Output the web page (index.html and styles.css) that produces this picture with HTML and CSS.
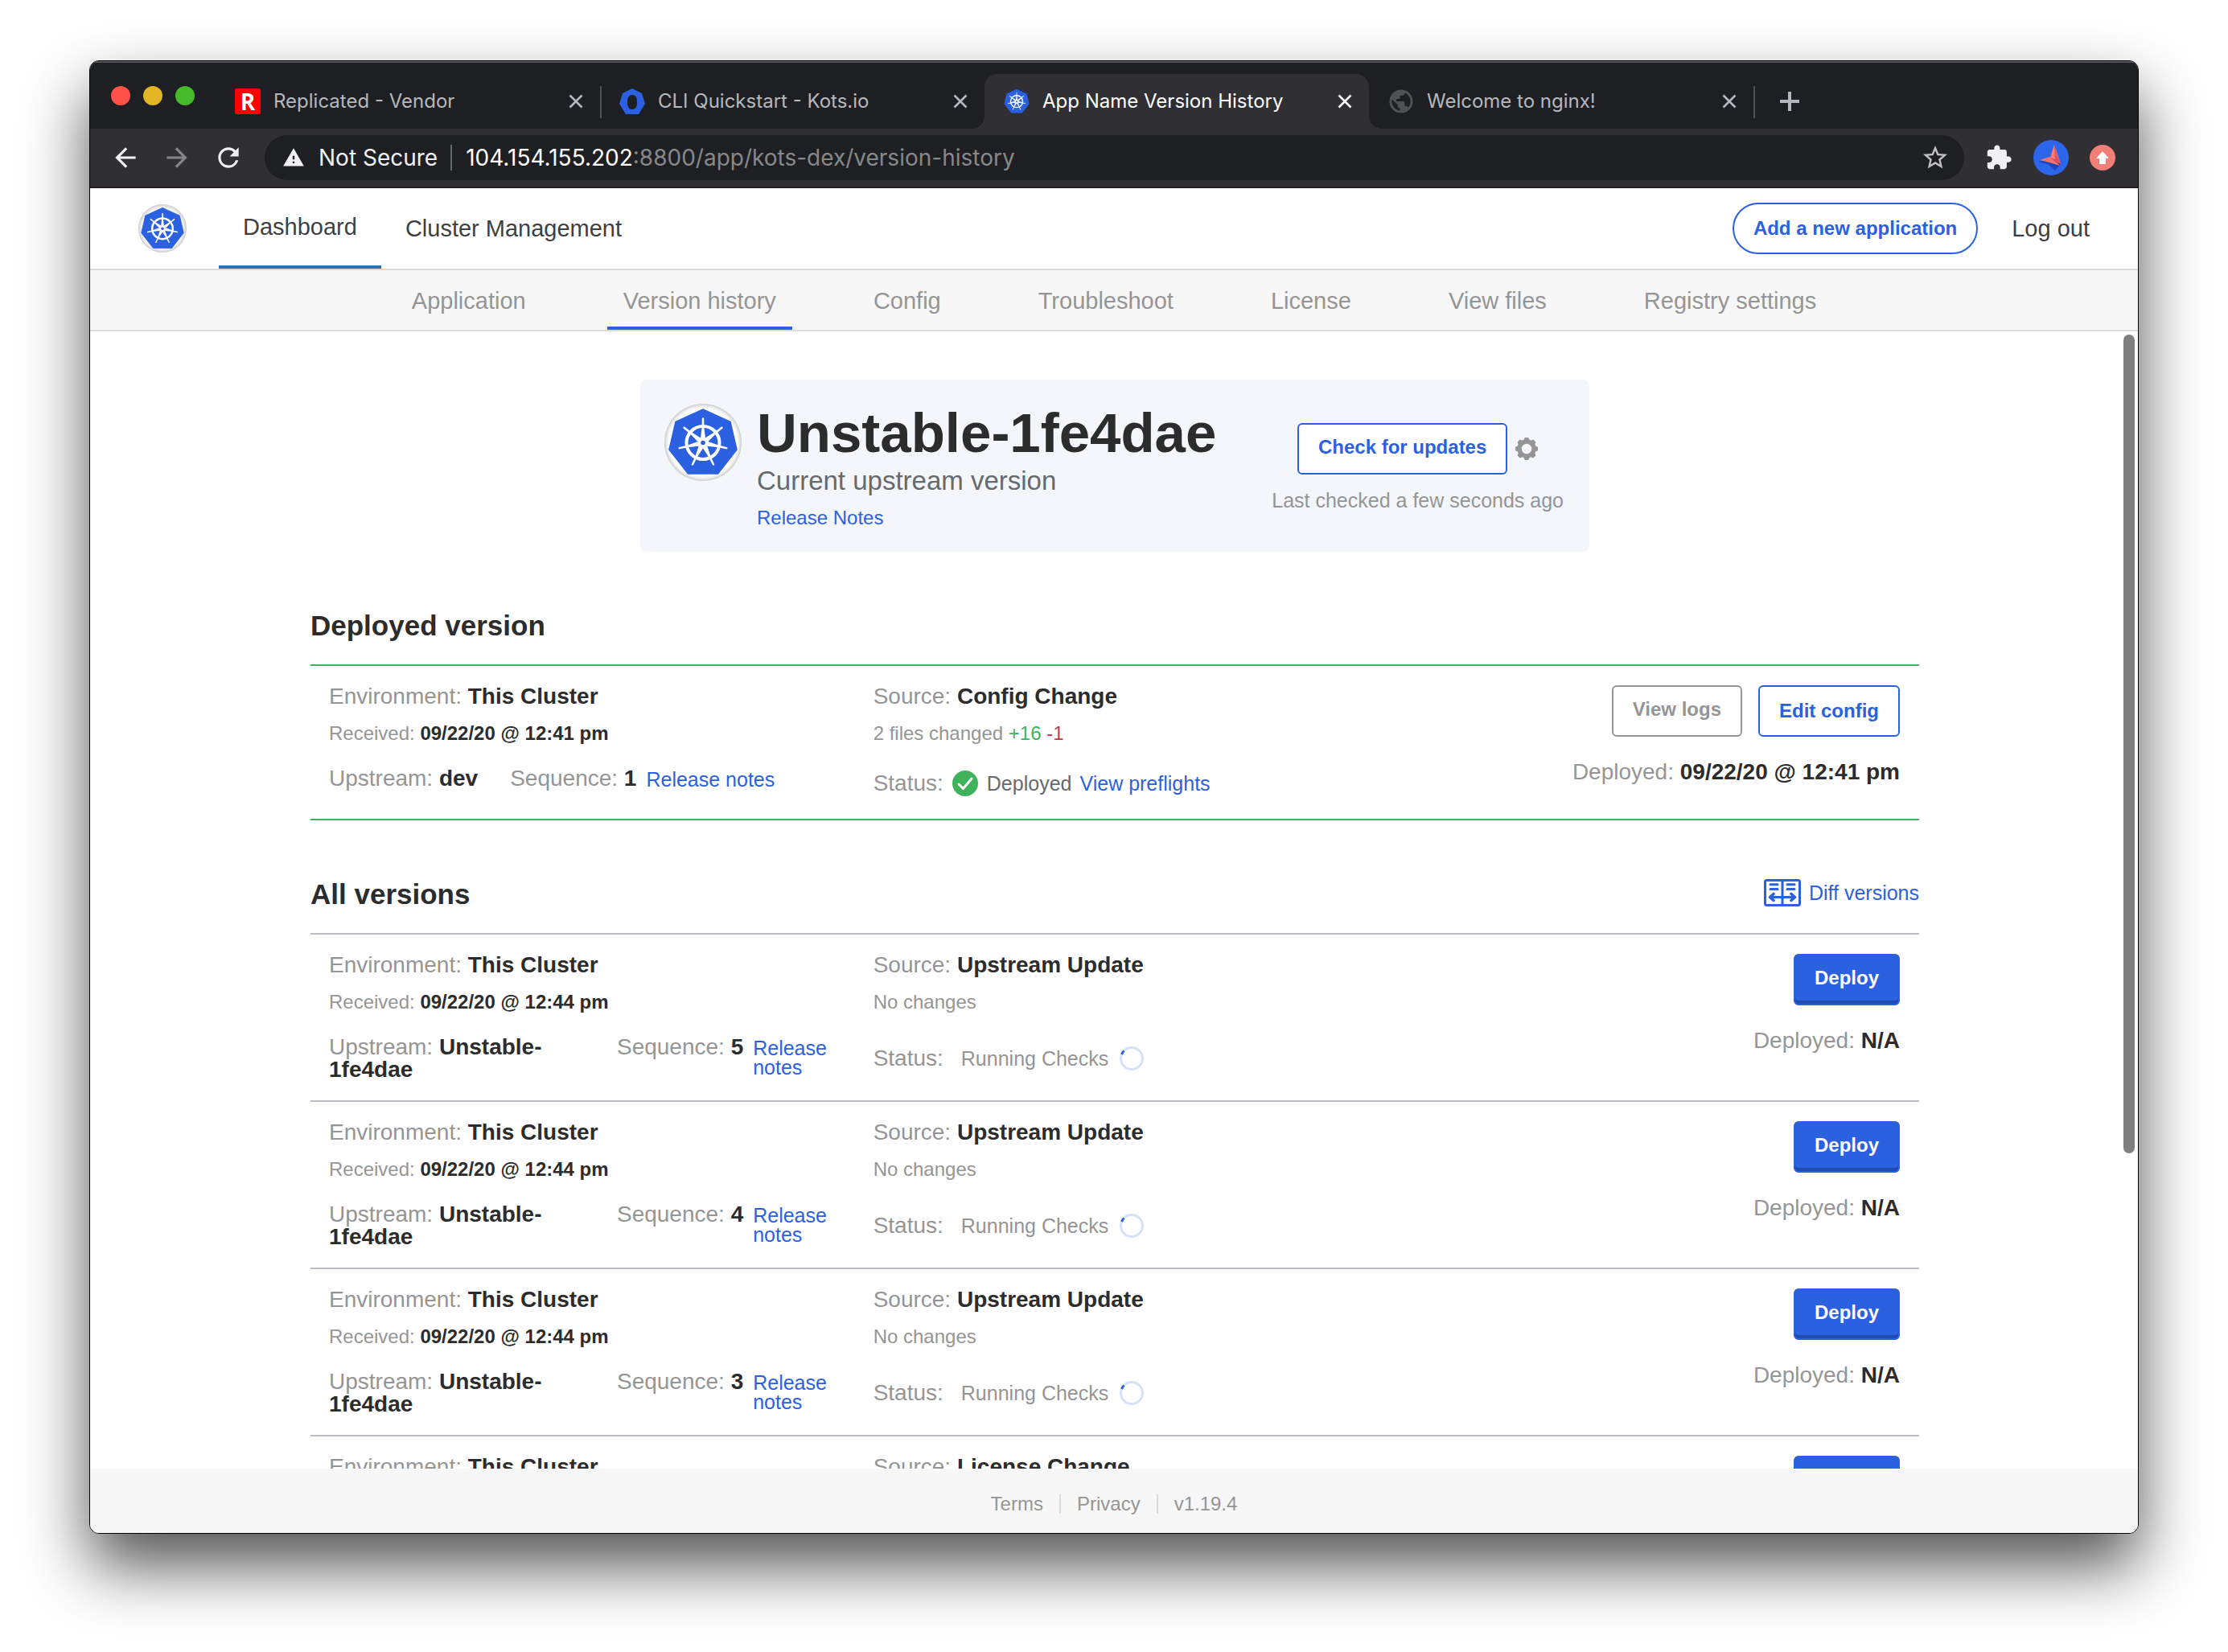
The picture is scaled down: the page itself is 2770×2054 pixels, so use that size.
FILE: index.html
```html
<!DOCTYPE html>
<html lang="en">
<head>
<meta charset="utf-8">
<title>App Name Version History</title>
<link rel="stylesheet" href="styles.css">
</head>
<body>
<svg class="sprite" aria-hidden="true">
  <symbol id="wheel" viewBox="0 0 96 96">
    <path d="M48 7 82 22.500 90 57 66.500 87H29.500L6 57 14 22.500z" fill="#2b61e0" stroke="#2b61e0" stroke-width="1.500" stroke-linejoin="round"/>
    <g fill="#fff">
      <path id="spoke" d="M46.800 18.500a1.200 1.200 0 0 1 2.400 0L49.400 30 51 42.500 48 45 45 42.500 46.600 30z"/>
      <use href="#spoke" transform="rotate(51.430 48 48.500)"/>
      <use href="#spoke" transform="rotate(102.860 48 48.500)"/>
      <use href="#spoke" transform="rotate(154.290 48 48.500)"/>
      <use href="#spoke" transform="rotate(205.710 48 48.500)"/>
      <use href="#spoke" transform="rotate(257.140 48 48.500)"/>
      <use href="#spoke" transform="rotate(308.570 48 48.500)"/>
      <circle cx="48" cy="48.500" r="6"/>
    </g>
    <circle cx="48" cy="48.500" r="20.500" fill="none" stroke="#fff" stroke-width="4"/>
    <circle cx="48" cy="48.500" r="2.800" fill="#2b61e0"/>
  </symbol>
  <symbol id="close" viewBox="0 0 20 20">
    <path d="M2.500 2.500l15 15M17.500 2.500l-15 15" fill="none" stroke="currentColor" stroke-width="2.600"/>
  </symbol>
</svg>

<div class="window">
  <div class="tabstrip">
    <div class="lights"><span class="light light-red"></span><span class="light light-yellow"></span><span class="light light-green"></span></div>
    <div class="tab tab-divided">
      <span class="favicon favicon-r">R</span>
      <span class="tab-title">Replicated - Vendor</span>
      <button class="tab-close" aria-label="Close tab"><svg><use href="#close"/></svg></button>
    </div>
    <div class="tab">
      <svg class="favicon" viewBox="0 0 32 32"><path fill-rule="evenodd" d="M16 0 28 6 32 19 24 32H8L0 19 4 6zM16 8C12 8 10 11 10 17s2 9 6 9 6-3 6-9-2-9-6-9z" fill="#2b61e0"/></svg>
      <span class="tab-title">CLI Quickstart - Kots.io</span>
      <button class="tab-close" aria-label="Close tab"><svg><use href="#close"/></svg></button>
    </div>
    <div class="tab tab-active">
      <svg class="favicon" viewBox="4 4 88 88"><use href="#wheel" width="96" height="96"/></svg>
      <span class="tab-title">App Name Version History</span>
      <button class="tab-close" aria-label="Close tab"><svg><use href="#close"/></svg></button>
    </div>
    <div class="tab tab-divided">
      <svg class="favicon favicon-globe" viewBox="1 1 22 22"><path fill="currentColor" d="M12 2C6.480 2 2 6.480 2 12s4.480 10 10 10 10-4.480 10-10S17.520 2 12 2zm-1 17.930c-3.950-.490-7-3.850-7-7.930 0-.620.080-1.210.210-1.790L9 15v1c0 1.100.900 2 2 2v1.930zm6.900-2.540c-.260-.810-1-1.390-1.900-1.390h-1v-3c0-.550-.450-1-1-1H8v-2h2c.550 0 1-.450 1-1V7h2c1.100 0 2-.900 2-2v-.410c2.930 1.190 5 4.060 5 7.410 0 2.080-.800 3.970-2.100 5.390z"/></svg>
      <span class="tab-title">Welcome to nginx!</span>
      <button class="tab-close" aria-label="Close tab"><svg><use href="#close"/></svg></button>
    </div>
    <button class="new-tab" aria-label="New tab"><svg viewBox="0 0 26 26"><path d="M13 1v24M1 13h24" stroke="currentColor" stroke-width="4"/></svg></button>
  </div>

  <div class="toolbar">
    <button class="tool" aria-label="Back"><svg viewBox="0 0 24 24"><path d="M20 11H7.830l5.590-5.590L12 4l-8 8 8 8 1.410-1.410L7.830 13H20v-2z"/></svg></button>
    <button class="tool tool-dim" aria-label="Forward"><svg viewBox="0 0 24 24"><path d="M4 11h12.170l-5.590-5.590L12 4l8 8-8 8-1.410-1.410L16.170 13H4v-2z"/></svg></button>
    <button class="tool" aria-label="Reload"><svg viewBox="0 0 24 24"><path d="M17.650 6.350A7.960 7.960 0 0 0 12 4c-4.420 0-7.990 3.580-7.990 8s3.570 8 7.990 8c3.730 0 6.840-2.550 7.730-6h-2.080A5.990 5.990 0 0 1 12 18c-3.310 0-6-2.690-6-6s2.690-6 6-6c1.660 0 3.140.690 4.220 1.780L13 11h7V4l-2.350 2.350z"/></svg></button>
    <div class="omnibox">
      <svg class="warn" viewBox="0 0 24 24"><path d="M1 21h22L12 2 1 21zm12-3h-2v-2h2v2zm0-4h-2v-4h2v4z"/></svg>
      <span class="insecure">Not Secure</span>
      <div class="url" role="textbox" aria-label="Address" contenteditable="true" spellcheck="false">104.154.155.202<span class="url-path">:8800/app/kots-dex/version-history</span></div>
      <button class="star" aria-label="Bookmark"><svg viewBox="0 0 24 24"><path d="M22 9.240l-7.190-.620L12 2 9.190 8.630 2 9.240l5.460 4.730L5.820 21 12 17.270 18.180 21l-1.630-7.030L22 9.240zM12 15.400l-3.760 2.270 1-4.280-3.320-2.880 4.380-.380L12 6.100l1.710 4.040 4.380.380-3.320 2.880 1 4.280L12 15.400z"/></svg></button>
    </div>
    <button class="tool tool-ext" aria-label="Extensions"><svg viewBox="0 0 24 24"><path d="M20.500 11H19V7c0-1.100-.900-2-2-2h-4V3.500C13 2.120 11.880 1 10.500 1S8 2.120 8 3.500V5H4c-1.100 0-1.990.900-1.990 2v3.800H3.500c1.490 0 2.700 1.210 2.700 2.700s-1.210 2.700-2.700 2.700H2V20c0 1.100.900 2 2 2h3.800v-1.500c0-1.490 1.210-2.700 2.700-2.700s2.700 1.210 2.700 2.700V22H17c1.100 0 2-.900 2-2v-4h1.500c1.380 0 2.500-1.120 2.500-2.500S21.880 11 20.500 11z"/></svg></button>
    <button class="tool tool-avatar" aria-label="Profile"><svg viewBox="0 0 44 44"><circle cx="22" cy="22" r="22" fill="#2b66ea"/><path d="M6 27 22 22 34 30 27 38 18 30z" fill="#1d45b8"/><path d="M26 6 33 27 21 22z" fill="#ff7d74"/><path d="M26 6 29 18 33 27 35 30 27 27z" fill="#e0525c"/><path d="M8 25 20 21 27 25 33 32 20 28z" fill="#f8706c"/><path d="M20 21 27 25 33 32 24 24z" fill="#c93f55"/></svg></button>
    <button class="tool tool-update" aria-label="Update"><svg viewBox="0 0 32 32"><circle cx="16" cy="16" r="16" fill="#f07f78"/><path d="M16 8 24 17H20V24H12V17H8z" fill="#fff"/></svg></button>
  </div>

  <header class="header">
    <a class="logo" href="#"><svg><use href="#wheel"/></svg></a>
    <nav class="primary">
      <a class="primary-link is-active" href="#">Dashboard</a>
      <a class="primary-link" href="#">Cluster Management</a>
    </nav>
    <button class="btn btn-pill">Add a new application</button>
    <a class="logout" href="#">Log out</a>
  </header>

  <nav class="subnav">
    <a href="#">Application</a>
    <a class="is-active" href="#">Version history</a>
    <a href="#">Config</a>
    <a href="#">Troubleshoot</a>
    <a href="#">License</a>
    <a href="#">View files</a>
    <a href="#">Registry settings</a>
  </nav>

  <main class="main">
    <section class="hero">
      <div class="hero-icon"><svg><use href="#wheel"/></svg></div>
      <div class="hero-text">
        <h1>Unstable-1fe4dae</h1>
        <p>Current upstream version</p>
        <a href="#">Release Notes</a>
      </div>
      <div class="hero-actions">
        <div class="hero-check">
          <button class="btn btn-raised">Check for updates</button>
          <button class="gear" aria-label="Update settings"><svg viewBox="0 0 28 28"><circle cx="14" cy="14" r="9" fill="none" stroke="currentColor" stroke-width="5.400"/><g fill="currentColor"><path id="tooth" d="M10.800 2.500 11.800 0h4.400l1 2.500V5h-6.400z"/><use href="#tooth" transform="rotate(45 14 14)"/><use href="#tooth" transform="rotate(90 14 14)"/><use href="#tooth" transform="rotate(135 14 14)"/><use href="#tooth" transform="rotate(180 14 14)"/><use href="#tooth" transform="rotate(225 14 14)"/><use href="#tooth" transform="rotate(270 14 14)"/><use href="#tooth" transform="rotate(315 14 14)"/></g></svg></button>
        </div>
        <p>Last checked a few seconds ago</p>
      </div>
    </section>

    <div class="versions">
      <div class="section-head"><h2>Deployed version</h2></div>
      <article class="row row-deployed">
        <div class="col">
          <p class="line">Environment: <strong>This Cluster</strong></p>
          <p class="meta">Received: <strong>09/22/20 @ 12:41 pm</strong></p>
          <div class="source">
            <p class="line">Upstream: <strong>dev</strong></p>
            <div class="sequence"><p class="line">Sequence: <strong>1</strong></p><a href="#">Release notes</a></div>
          </div>
        </div>
        <div class="col">
          <p class="line">Source: <strong>Config Change</strong></p>
          <p class="meta">2 files changed <span class="added">+16</span> <span class="removed">-1</span></p>
          <div class="status">
            <span class="line">Status:</span>
            <svg class="check" viewBox="0 0 32 32"><circle cx="16" cy="16" r="16" fill="#3fb35b"/><path d="M8 17l5.500 5.500L24 10" fill="none" stroke="#fff" stroke-width="3" stroke-linecap="round" stroke-linejoin="round"/></svg>
            <span class="status-done">Deployed</span>
            <a href="#">View preflights</a>
          </div>
        </div>
        <div class="col col-end">
          <div class="buttons"><button class="btn btn-grey btn-raised">View logs</button><button class="btn">Edit config</button></div>
          <p class="line">Deployed: <strong>09/22/20 @ 12:41 pm</strong></p>
        </div>
      </article>

      <div class="section-head">
        <h2>All versions</h2>
        <a class="diff" href="#"><svg viewBox="0 0 46 34"><g fill="none" stroke="currentColor" stroke-width="3" stroke-linecap="round" stroke-linejoin="round"><rect x="1.500" y="1.500" width="43" height="31" rx="2"/><path d="M23 2v30M8 6.800h9M8 12.500h9M29 6.800h9M29 12.500h9M8 22.500h30"/><path d="M12 18.500 7.500 22.500 12 26.500M34 18.500 38.500 22.500 34 26.500" stroke-width="3.600"/></g></svg>Diff versions</a>
      </div>
      <article class="row">
        <div class="col">
          <p class="line">Environment: <strong>This Cluster</strong></p>
          <p class="meta">Received: <strong>09/22/20 @ 12:44 pm</strong></p>
          <div class="source">
            <p class="line">Upstream: <strong>Unstable-1fe4dae</strong></p>
            <div class="sequence"><p class="line">Sequence: <strong>5</strong></p><a href="#">Release notes</a></div>
          </div>
        </div>
        <div class="col">
          <p class="line">Source: <strong>Upstream Update</strong></p>
          <p class="meta">No changes</p>
          <div class="status"><span class="line">Status:</span><span class="status-running">Running Checks</span><svg class="spinner" viewBox="0 0 30 30"><circle cx="15" cy="15" r="13.500"/><path d="M2.500 10A13.500 13.500 0 0 1 5.500 5.500"/></svg></div>
        </div>
        <div class="col col-end">
          <div class="buttons"><button class="btn btn-primary btn-raised">Deploy</button></div>
          <p class="line">Deployed: <strong>N/A</strong></p>
        </div>
      </article>
      <article class="row">
        <div class="col">
          <p class="line">Environment: <strong>This Cluster</strong></p>
          <p class="meta">Received: <strong>09/22/20 @ 12:44 pm</strong></p>
          <div class="source">
            <p class="line">Upstream: <strong>Unstable-1fe4dae</strong></p>
            <div class="sequence"><p class="line">Sequence: <strong>4</strong></p><a href="#">Release notes</a></div>
          </div>
        </div>
        <div class="col">
          <p class="line">Source: <strong>Upstream Update</strong></p>
          <p class="meta">No changes</p>
          <div class="status"><span class="line">Status:</span><span class="status-running">Running Checks</span><svg class="spinner" viewBox="0 0 30 30"><circle cx="15" cy="15" r="13.500"/><path d="M2.500 10A13.500 13.500 0 0 1 5.500 5.500"/></svg></div>
        </div>
        <div class="col col-end">
          <div class="buttons"><button class="btn btn-primary btn-raised">Deploy</button></div>
          <p class="line">Deployed: <strong>N/A</strong></p>
        </div>
      </article>
      <article class="row">
        <div class="col">
          <p class="line">Environment: <strong>This Cluster</strong></p>
          <p class="meta">Received: <strong>09/22/20 @ 12:44 pm</strong></p>
          <div class="source">
            <p class="line">Upstream: <strong>Unstable-1fe4dae</strong></p>
            <div class="sequence"><p class="line">Sequence: <strong>3</strong></p><a href="#">Release notes</a></div>
          </div>
        </div>
        <div class="col">
          <p class="line">Source: <strong>Upstream Update</strong></p>
          <p class="meta">No changes</p>
          <div class="status"><span class="line">Status:</span><span class="status-running">Running Checks</span><svg class="spinner" viewBox="0 0 30 30"><circle cx="15" cy="15" r="13.500"/><path d="M2.500 10A13.500 13.500 0 0 1 5.500 5.500"/></svg></div>
        </div>
        <div class="col col-end">
          <div class="buttons"><button class="btn btn-primary btn-raised">Deploy</button></div>
          <p class="line">Deployed: <strong>N/A</strong></p>
        </div>
      </article>
      <article class="row">
        <div class="col">
          <p class="line">Environment: <strong>This Cluster</strong></p>
        </div>
        <div class="col">
          <p class="line">Source: <strong>License Change</strong></p>
        </div>
        <div class="col col-end">
          <div class="buttons"><button class="btn btn-primary btn-raised" aria-label="Deploy"></button></div>
        </div>
      </article>
    </div>
    <div class="scroll-thumb"></div>
  </main>

  <footer class="footer">
    <a href="#">Terms</a>
    <a href="#">Privacy</a>
    <span>v1.19.4</span>
  </footer>
</div>
</body>
</html>
```
FILE: styles.css
```css
* { box-sizing: border-box; }

:root {
  --blue: #2b61e0;
  --grey: #959595;
  --ink: #2c2c2c;
}

body {
  margin: 0;
  height: 100vh;
  padding: 75px 111px 147px;
  background: #fff;
  color: var(--ink);
  font-family: "Liberation Sans", Arial, sans-serif;
  font-size: 24px;
  line-height: 24px;
}

h1, h2, p { margin: 0; }
a { color: var(--blue); text-decoration: none; }
svg { display: block; }
button {
  padding: 0;
  border: 0;
  background: none;
  color: inherit;
  font: inherit;
  cursor: pointer;
}

.sprite { position: absolute; width: 0; height: 0; }

.window {
  display: flex;
  flex-direction: column;
  height: 100%;
  border: 1px solid #000;
  border-radius: 12px;
  overflow: hidden;
  background: #fff;
  box-shadow: 0 40px 80px rgba(0, 0, 0, 0.68);
}

/* Browser tabs */
.tabstrip {
  display: flex;
  flex: none;
  padding-top: 14px;
  border-top: 2px solid #55585a;
  background: #1e1f23;
  color: #b6b8bd;
  font-family: Inter, sans-serif;
  font-size: 24px;
}
.lights {
  display: flex;
  flex: none;
  align-items: center;
  gap: 16px;
  width: 156px;
  padding: 0 0 14px 26px;
}
.light { width: 24px; height: 24px; border-radius: 50%; }
.light-red { background: #ff5147; }
.light-yellow { background: #e2b526; }
.light-green { background: #46bb2a; }

.tab {
  position: relative;
  display: flex;
  flex: 0 1 478px;
  align-items: center;
  gap: 16px;
  height: 68px;
  padding: 0 20px 0 24px;
}
.tab-divided::after {
  content: "";
  position: absolute;
  right: -2px;
  top: 15px;
  width: 2px;
  height: 40px;
  background: #505156;
}
.tab-active {
  border-radius: 16px 16px 0 0;
  background: #302f33;
  color: #fff;
}
.tab-active::before,
.tab-active::after {
  content: "";
  position: absolute;
  bottom: 0;
  width: 16px;
  height: 16px;
}
.tab-active::before { left: -16px; background: radial-gradient(circle at 0 0, transparent 16px, #302f33 16px); }
.tab-active::after { right: -16px; background: radial-gradient(circle at 100% 0, transparent 16px, #302f33 16px); }
.tab-title { flex: 1; white-space: nowrap; overflow: hidden; line-height: 32px; }
.tab-close svg { width: 20px; height: 20px; }
.favicon { flex: none; width: 32px; height: 32px; }
.favicon-r {
  border-radius: 2px;
  background: #f00;
  color: #fff;
  font: bold 28px/32px "Open Sans", sans-serif;
  text-align: center;
}
.favicon-globe { color: #505155; }
.new-tab { display: flex; align-items: center; padding: 0 32px; }
.new-tab svg { width: 26px; height: 26px; }

/* Browser toolbar */
.toolbar {
  display: flex;
  flex: none;
  align-items: center;
  gap: 26px;
  padding: 8px 28px 8px 25px;
  border-bottom: 2px solid #231d21;
  background: #302f33;
  color: #f1f1f3;
  font-family: Inter, sans-serif;
  font-size: 28px;
}
.toolbar svg { fill: currentColor; }
.tool svg { width: 38px; height: 38px; }
.tool-dim { color: #86868a; }
.tool-ext svg { width: 34px; height: 34px; }
.tool-avatar svg { width: 44px; height: 44px; }
.tool-update svg { width: 32px; height: 32px; }
.omnibox {
  display: flex;
  flex: 1;
  align-items: center;
  gap: 17px;
  height: 56px;
  padding: 0 18px 0 22px;
  border-radius: 28px;
  background: #1e1f22;
}
.warn { width: 28px; height: 28px; }
.insecure {
  padding-right: 16px;
  border-right: 2px solid #66676b;
  line-height: 32px;
  white-space: nowrap;
}
.url { flex: 1; color: #fff; line-height: 32px; white-space: nowrap; overflow: hidden; }
.url-path { color: #87888b; }
.star { color: #c1c1c4; }
.star svg { width: 36px; height: 36px; }

/* Application header */
.header {
  display: flex;
  flex: none;
  align-items: center;
  height: 102px;
  padding: 0 60px;
  border-bottom: 2px solid #dadada;
  font-size: 29px;
}
.logo, .hero-icon {
  flex: none;
  border-radius: 50%;
  background: #fff;
  box-shadow: inset 0 0 6px rgba(0, 0, 0, 0.4);
}
.logo { width: 60px; height: 60px; margin-right: 40px; }
.logo svg { width: 60px; height: 60px; }
.primary { display: flex; flex: 1; align-self: stretch; }
.primary-link {
  display: flex;
  align-items: center;
  padding: 0 30px;
  color: #3f3f3f;
}
.primary-link.is-active { border-bottom: 4px solid #2f6fb3; }
.logout { margin-left: 42px; color: #3f3f3f; }

.subnav {
  display: flex;
  flex: none;
  justify-content: center;
  gap: 81px;
  height: 76px;
  border-bottom: 2px solid #dadada;
  background: #f7f7f7;
  font-size: 29px;
}
.subnav a {
  display: flex;
  align-items: center;
  padding: 6px 20px 0;
  border-bottom: 4px solid transparent;
  color: var(--grey);
}
.subnav .is-active { border-bottom-color: var(--blue); }

/* Buttons */
.btn {
  height: 64px;
  padding: 0 24px;
  border: 2px solid var(--blue);
  border-radius: 6px;
  background: #fff;
  color: var(--blue);
  font-size: 24px;
  font-weight: bold;
  white-space: nowrap;
}
.btn-raised { padding-bottom: 4px; }
.btn-pill { border-radius: 32px; }
.btn-grey { border-color: var(--grey); color: var(--grey); }
.btn-primary {
  min-width: 132px;
  background: var(--blue);
  color: #fff;
  box-shadow: inset 0 -4px #2149b0;
}

/* Page body */
.main {
  position: relative;
  flex: 1;
  min-height: 0;
  padding: 60px 22px 0 24px;
  overflow: hidden;
}
.scroll-thumb {
  position: absolute;
  top: 4px;
  right: 4px;
  width: 14px;
  height: 72%;
  border-radius: 7px;
  background: #7f7f7f;
}

.hero {
  display: flex;
  max-width: 1180px;
  margin: 0 auto;
  padding: 30px 32px 28px 30px;
  border-radius: 8px;
  background: #f3f6fb;
}
.hero-icon { width: 96px; height: 96px; margin-right: 19px; }
.hero-icon svg { width: 96px; height: 96px; }
.hero-text { flex: 1; }
.hero-text h1 { font-size: 69px; line-height: 74px; }
.hero-text p { color: #666a6f; font-size: 33px; line-height: 44px; }
.hero-text a { display: block; margin-top: 10px; line-height: 28px; }
.hero-actions { padding-top: 24px; color: var(--grey); font-size: 25px; line-height: 28px; }
.hero-check { display: flex; align-items: center; justify-content: center; gap: 10px; margin-bottom: 18px; }
.gear svg { width: 28px; height: 28px; }

.versions { max-width: 2000px; margin: 0 auto; }
.section-head {
  display: flex;
  align-items: center;
  justify-content: space-between;
  margin: 72px 0 28px;
}
.section-head h2 { font-size: 35px; line-height: 40px; }
.diff { display: flex; align-items: center; gap: 10px; padding-bottom: 4px; font-size: 25px; }
.diff svg { width: 46px; height: 34px; }

.row {
  display: grid;
  grid-template-columns: 677fr 677fr 600fr;
  padding: 24px 24px 24px 23px;
  border-top: 2px solid #babdc1;
}
.row-deployed { border-top-color: #44b061; border-bottom: 2px solid #44b061; }
.col { display: flex; flex-direction: column; color: var(--grey); }
.col strong { color: var(--ink); }
.line { font-size: 28px; line-height: 28px; }
.meta { margin-top: 20px; }
.added { color: #3fb35b; }
.removed { color: #b9404a; }
.source { display: flex; gap: 40px; margin: 30px 35px 0 0; }
.sequence { display: flex; gap: 12px; }
.sequence .line { flex: none; }
.sequence a { padding-top: 3px; font-size: 25px; }
.status { display: flex; flex: 1; align-items: center; min-height: 40px; margin-top: 30px; font-size: 25px; }
.check { width: 32px; height: 32px; margin: 0 11px; }
.status-done { margin-right: 10px; color: #666a6f; }
.status-running { margin: 0 14px 0 22px; }
.spinner { width: 30px; height: 30px; fill: none; stroke: #d5e1fa; stroke-width: 3; }
.spinner path { stroke: var(--blue); }
.col-end { align-items: flex-end; }
.buttons { display: flex; gap: 20px; margin-bottom: 30px; }

.footer {
  display: flex;
  flex: none;
  align-items: center;
  justify-content: center;
  height: 80px;
  padding-top: 8px;
  background: #f7f7f7;
  color: var(--grey);
}
.footer > * { padding: 0 20px; color: var(--grey); }
.footer > * + * { border-left: 2px solid #dadada; }
```
